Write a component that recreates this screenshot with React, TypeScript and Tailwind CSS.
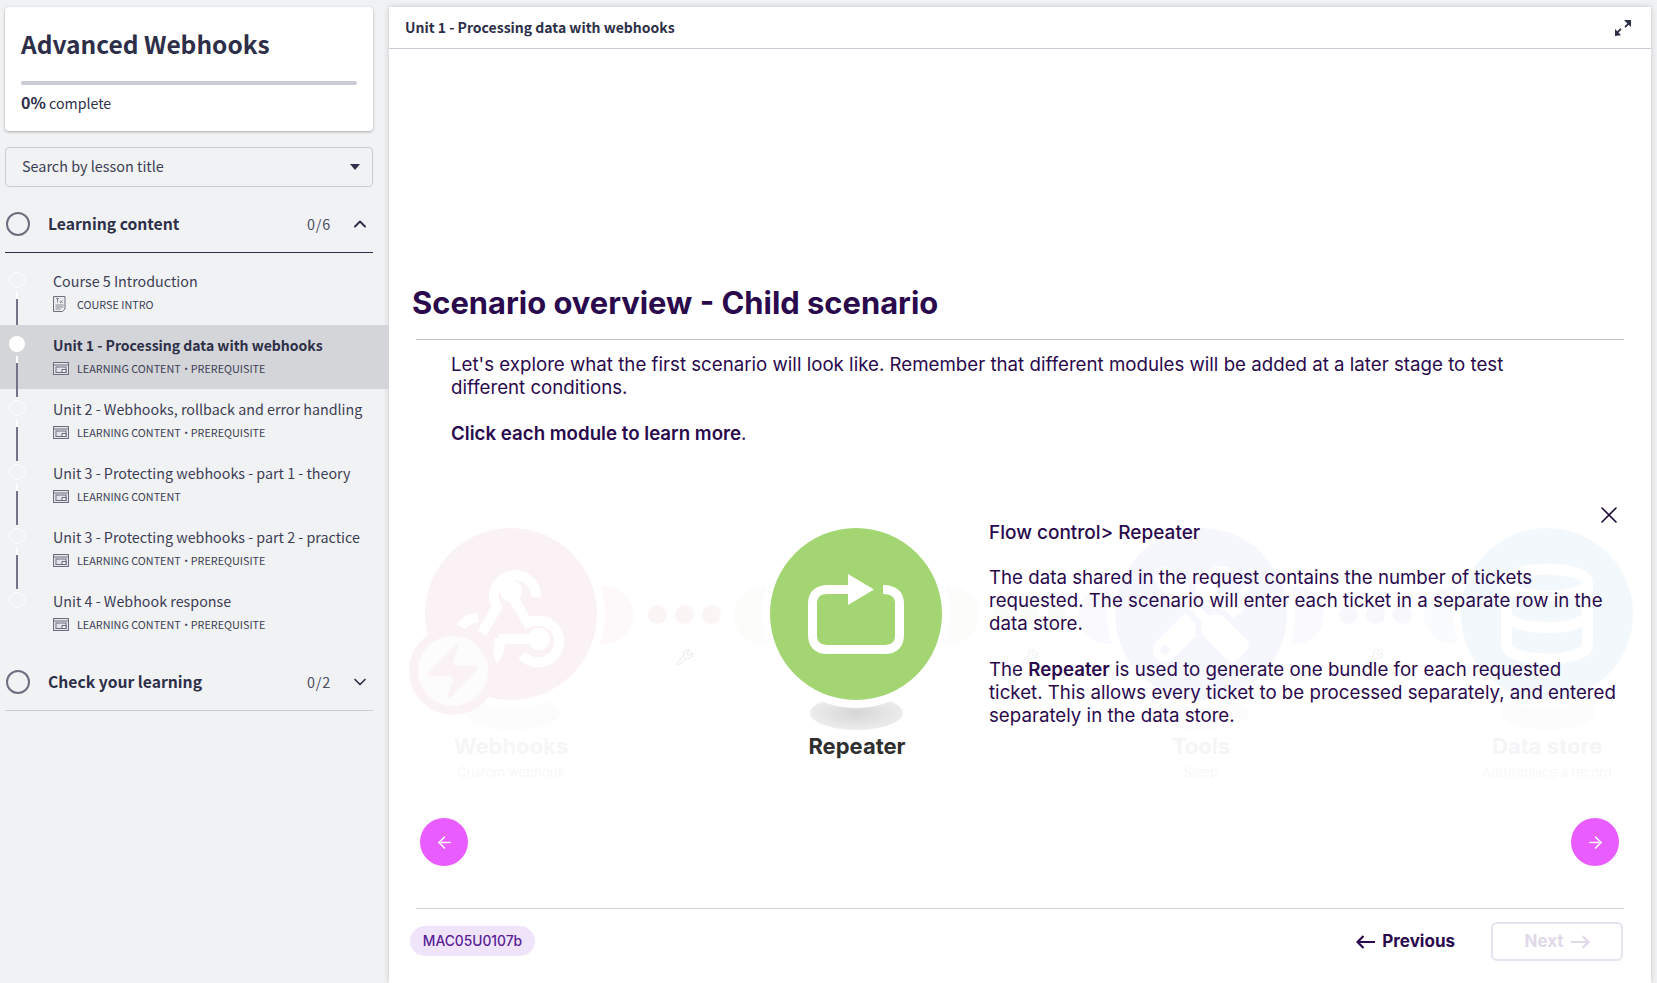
import { ChevronDown, ChevronUp, Zap, Database, Wrench, X, ArrowLeft, ArrowRight } from 'lucide-react'
import { FaTools } from 'react-icons/fa'

const SOURCE = "font-['Noto_Sans_CJK_SC',_'Noto_Sans',_sans-serif]"

const LESSONS = [
  { title: 'Unit 1 - Processing data with webhooks', prereq: true, active: true },
  { title: 'Unit 2 - Webhooks, rollback and error handling', prereq: true },
  { title: 'Unit 3 - Protecting webhooks - part 1 - theory', prereq: false },
  { title: 'Unit 3 - Protecting webhooks - part 2 - practice', prereq: true },
  { title: 'Unit 4 - Webhook response', prereq: true },
]

function SlideIcon() {
  return (
    <svg width="16" height="13" viewBox="0 0 16 13" fill="none" stroke="#6c6e80" strokeWidth="1">
      <rect x="0.5" y="0.5" width="15" height="12" fill="#e4e5ea" />
      <path d="M0.5 3h15" />
      <rect x="3" y="5" width="10" height="5.5" fill="none" />
      <rect x="9" y="7.5" width="4" height="3" fill="#f1f2f4" />
    </svg>
  )
}

function DocIcon() {
  return (
    <svg width="13" height="16" viewBox="0 0 13 16" fill="none" stroke="#6c6e80" strokeWidth="1">
      <path d="M0.5 0.500h11.500v12.500l-2.500 2.500h-9z" fill="#eceded" />
      <path d="M3 2.500h3M4.500 2.500v4M7 4.500l2.500 2.500M9.500 4.500l-2.500 2.500M2.500 9h8M2.500 11h8M2.500 13h5" strokeWidth="0.8" />
    </svg>
  )
}

function Dot({ filled, line }: { filled?: boolean; line?: boolean }) {
  return (
    <>
      <span
        className={
          filled
            ? 'absolute left-[9px] top-[11px] h-4 w-4 rounded-full bg-white'
            : 'absolute left-[9px] top-[11px] h-4 w-4 rounded-full border border-white'
        }
      />
      {line && (
        <span className="absolute left-[16px] top-[31px] flex h-[41px] w-[2px] flex-col">
          <span className="h-[7px] bg-white" />
          <span className="flex-1 bg-[#72748a]" />
        </span>
      )}
    </>
  )
}

function LessonRow({ title, meta, prereq, active, line, doc }: {
  title: string
  meta: string
  prereq?: boolean
  active?: boolean
  line?: boolean
  doc?: boolean
}) {
  return (
    <div className={active ? 'relative h-16 bg-[#d4d5d9] pl-[53px] pt-[8px]' : 'relative h-16 pl-[53px] pt-[8px]'}>
      <Dot filled={active} line={line} />
      <p className={active ? 'text-[14px] leading-6 font-semibold text-[#2d2f48]' : 'text-[14.3px] leading-6 text-[#3c3e55]'}>{title}</p>
      <div className="mt-[1px] flex h-[20px] items-center text-[10.8px] text-[#3c3e55]">
        <span className="flex w-6 items-center">{doc ? <DocIcon /> : <SlideIcon />}</span>
        <span>{meta}</span>
        {prereq && <span className="w-[10px] text-center">·</span>}
        {prereq && <span>PREREQUISITE</span>}
      </div>
    </div>
  )
}

function SectionHead({ title, count, open }: { title: string; count: string; open?: boolean }) {
  return (
    <div className="ml-[5px] flex h-[56px] w-[368px] items-center">
      <span className="ml-[1px] h-6 w-6 rounded-full border-2 border-[#6c6e80]" />
      <span className="ml-[18px] flex-1 text-[15.7px] font-semibold text-[#2d2f48]">{title}</span>
      <span className="text-[14.4px] tracking-[0.8px] text-[#4b4d63]">{count}</span>
      <span className="ml-[19px] mr-[3px] text-[#2d2f48]">
        {open ? <ChevronUp size={20} strokeWidth={2.4} /> : <ChevronDown size={20} strokeWidth={2} />}
      </span>
    </div>
  )
}

function Sidebar() {
  return (
    <aside className={`h-full w-[389px] shrink-0 pt-[7px] ${SOURCE}`}>
      <div className="ml-[5px] h-[124px] w-[368px] rounded bg-white px-4 pt-[19px] shadow-[0_1px_3px_rgba(0,0,0,0.3)]">
        <h2 className="text-[24.5px] leading-9 font-semibold text-[#2d2f48]">Advanced Webhooks</h2>
        <div className="mt-[19px] h-1 rounded bg-[#c9cbd6]" />
        <p className="mt-[5px] text-[14.2px] leading-6 text-[#2d2f48]">
          <span className="text-[16px] font-semibold">0%</span> complete
        </p>
      </div>
      <div className="mt-4 ml-[5px] flex h-10 w-[368px] items-center justify-between rounded border border-[#c9cbd6] pr-3 pl-4 text-[14.4px] text-[#3c3e55]">
        <span className="pb-[2px]">Search by lesson title</span>
        <span className="h-0 w-0 border-x-[5px] border-t-[6px] border-x-transparent border-t-[#2d2f48]" />
      </div>
      <div className="mt-[9px]">
        <SectionHead title="Learning content" count="0/6" open />
        <div className="ml-[5px] w-[368px] border-t border-[#2d2f48]" />
        <div className="mt-[8px]">
          <LessonRow title="Course 5 Introduction" meta="COURSE INTRO" line doc />
          {LESSONS.map((l, i) => (
            <LessonRow
              key={l.title}
              title={l.title}
              meta="LEARNING CONTENT"
              prereq={l.prereq}
              active={l.active}
              line={i < LESSONS.length - 1}
            />
          ))}
        </div>
        <div className="mt-[9px]">
          <SectionHead title="Check your learning" count="0/2" />
          <div className="ml-[5px] w-[368px] border-t border-[#c9cbd6]" />
        </div>
      </div>
    </aside>
  )
}

function RepeatIcon() {
  return (
    <svg width="96" height="80" viewBox="0 0 96 80">
      <path
        d="M42 15.500H20Q4.500 15.500 4.500 30V61Q4.500 75.500 20 75.500H76Q91.500 75.500 91.500 61V30Q91.500 15.500 75 15.500"
        fill="none"
        stroke="#fff"
        strokeWidth="9"
      />
      <path d="M40 0L66 15.500L40 31Z" fill="#fff" />
    </svg>
  )
}

function WebhookIcon() {
  return (
    <svg width="110" height="110" viewBox="0 0 110 110" fill="none" stroke="#fff" strokeWidth="10">
      <path d="M80 38A21 21 0 1 0 41 48L26 74" />
      <circle cx="55" cy="32" r="11" fill="#fff" stroke="none" />
      <path d="M58 40L74 68" />
      <path d="M43 80H83" />
      <path d="M72 64A21 21 0 1 1 66 96" />
      <circle cx="83" cy="80" r="11" fill="#fff" stroke="none" />
      <path d="M22 58Q10 60 5 68" />
      <path d="M43 78Q46 92 36 102" />
    </svg>
  )
}

function Dots({ className }: { className: string }) {
  return (
    <div className={`absolute top-[134px] flex gap-[8px] ${className}`}>
      <span className="h-[19px] w-[19px] rounded-full bg-current" />
      <span className="h-[19px] w-[19px] rounded-full bg-current" />
      <span className="h-[19px] w-[19px] rounded-full bg-current" />
    </div>
  )
}

// faded and active scenario modules, placed on the diagram canvas
function Diagram() {
  return (
    <div className="relative mt-[26px] flex-1 font-['Inter',_sans-serif]">
      {/* connector bumps */}
      <span className="absolute left-[186px] top-[115px] h-[58px] w-[58px] rounded-full bg-[#fdf8f9]" />
      <span className="absolute left-[345px] top-[115px] h-[58px] w-[58px] rounded-full bg-[#fcfdfa]" />
      <span className="absolute left-[532px] top-[115px] h-[58px] w-[58px] rounded-full bg-[#fcfdfa]" />
      <span className="absolute left-[689px] top-[115px] h-[58px] w-[58px] rounded-full bg-[#fafafe]" />
      <span className="absolute left-[877px] top-[115px] h-[58px] w-[58px] rounded-full bg-[#fafafe]" />
      <span className="absolute left-[1035px] top-[115px] h-[58px] w-[58px] rounded-full bg-[#f9fbfd]" />

      <Dots className="left-[259px] text-[#fcf5f6]" />
      <Dots className="left-[604px] text-[#fafcf8]" />
      <Dots className="left-[950px] text-[#f8f8fc]" />

      <Wrench size={18} className="absolute left-[287px] top-[177px] text-[#f1f1f1]" />
      <Wrench size={18} className="absolute left-[632px] top-[177px] text-[#f5f5f5]" />
      <Wrench size={18} className="absolute left-[977px] top-[177px] text-[#f5f5f5]" />

      {/* webhooks */}
      <span className="absolute left-[77px] top-[225px] h-[34px] w-[94px] rounded-[50%] bg-[#fcfcfc]" />
      <div className="absolute left-[36px] top-[57px] flex h-[172px] w-[172px] items-center justify-center rounded-full bg-[#fbf2f5] shadow-[0_0_0_8px_white]">
        <WebhookIcon />
      </div>
      <div className="absolute left-[20px] top-[156px] flex h-[88px] w-[88px] items-center justify-center rounded-full border-[9px] border-[#fbf2f5] bg-[#fdfcfc]">
        <Zap size={66} fill="#fbf2f5" strokeWidth={0} />
      </div>
      <p className="absolute left-[36px] top-[261px] w-[172px] text-center text-[22px] leading-7 font-bold text-[#f6f6f7]">Webhooks</p>
      <p className="absolute left-[36px] top-[292px] w-[172px] text-center text-[13px] text-[#f8f8f8]">Custom webhook</p>

      {/* repeater */}
      <span className="absolute left-[421px] top-[225px] h-[34px] w-[93px] rounded-[50%] bg-[radial-gradient(closest-side,#d6d6d6,#ececec)]" />
      <div className="absolute left-[381px] top-[57px] flex h-[172px] w-[172px] items-center justify-center rounded-full bg-[#a3d572] shadow-[0_0_0_8px_white]">
        <RepeatIcon />
      </div>
      <p className="absolute left-[382px] top-[261px] w-[172px] text-center text-[22px] leading-7 font-bold text-[#2f2f2f]">Repeater</p>

      {/* tools */}
      <span className="absolute left-[766px] top-[225px] h-[34px] w-[94px] rounded-[50%] bg-[#fcfcfc]" />
      <div className="absolute left-[726px] top-[57px] flex h-[172px] w-[172px] items-center justify-center rounded-full bg-[#f6f6fd] shadow-[0_0_0_8px_white]">
        <FaTools size={96} className="text-white" />
      </div>
      <p className="absolute left-[726px] top-[261px] w-[172px] text-center text-[22px] leading-7 font-bold text-[#f5f5f7]">Tools</p>
      <p className="absolute left-[726px] top-[292px] w-[172px] text-center text-[13px] text-[#f8f8f8]">Sleep</p>

      {/* data store */}
      <span className="absolute left-[1112px] top-[225px] h-[34px] w-[94px] rounded-[50%] bg-[#fcfcfc]" />
      <div className="absolute left-[1072px] top-[57px] flex h-[172px] w-[172px] items-center justify-center rounded-full bg-[#f2f8fb] shadow-[0_0_0_8px_white]">
        <Database size={108} strokeWidth={2.4} className="text-white" />
      </div>
      <p className="absolute left-[1072px] top-[261px] w-[172px] text-center text-[22px] leading-7 font-bold text-[#f5f5f7]">Data store</p>
      <p className="absolute left-[1072px] top-[292px] w-[172px] text-center text-[13px] text-[#f8f8f8]">Add/replace a record</p>

      {/* overlay text */}
      <div className="absolute left-[600px] top-[50px] w-[640px] text-[18.7px] leading-[23px] text-[#2a0a4d]">
        <p className="text-[19px] font-medium">Flow control&gt; Repeater</p>
        <p className="mt-[22px]">
          The data shared in the request contains the number of tickets requested. The scenario will enter each ticket in a separate row in the data store.
        </p>
        <p className="mt-[23px]">
          The <span className="font-semibold">Repeater</span> is used to generate one bundle for each requested<br />ticket. This allows every ticket to be processed separately, and entered separately in the data store.
        </p>
      </div>
      <X size={28} strokeWidth={1.4} className="absolute left-[1206px] top-[30px] text-[#1c0a36]" />

      <button className="absolute left-[31px] top-[347px] flex h-12 w-12 items-center justify-center rounded-full bg-[#e95cff] text-white">
        <ArrowLeft size={19} strokeWidth={2} />
      </button>
      <button className="absolute left-[1182px] top-[347px] flex h-12 w-12 items-center justify-center rounded-full bg-[#e95cff] text-white">
        <ArrowRight size={19} strokeWidth={2} />
      </button>
    </div>
  )
}

export default function App() {
  return (
    <div className="flex h-screen overflow-hidden bg-[#f1f2f4]">
      <Sidebar />
      <main className="mt-[7px] mr-[6px] flex flex-1 flex-col bg-white shadow-[0_0_6px_rgba(0,0,0,0.18)]">
        <header className={`flex h-[42px] shrink-0 items-center justify-between border-b border-[#c9cbd6] pr-[20px] pl-4 ${SOURCE}`}>
          <span className="pb-[1px] text-[14px] font-semibold text-[#2d2f48]">Unit 1 - Processing data with webhooks</span>
          <svg width="16" height="16" viewBox="0 0 16 16" fill="#2d2f48">
            <path d="M9 0h7v7l-2.300-2.300-3 3-1.300-1.300 3-3zM0 16v-7l2.300 2.300 3-3 1.300 1.300-3 3 2.400 2.700z" />
          </svg>
        </header>
        <div className="flex flex-1 flex-col font-['Inter',_sans-serif]">
          <h1 className="mt-[234px] ml-[23px] text-[30.9px] leading-10 font-bold text-[#2a0a4d]">Scenario overview - Child scenario</h1>
          <div className="mx-[27px] mt-[16px] border-t border-[#c8c2c2]" />
          <div className="mt-[13px] mr-[100px] ml-[62px] text-[18.7px] leading-[23px] text-[#2a0a4d]">
            <p>Let's explore what the first scenario will look like. Remember that different modules will be added at a later stage to test different conditions.</p>
            <p className="mt-[23px]"><span className="font-semibold">Click each module to learn more</span>.</p>
          </div>
          <Diagram />
          <div className="mx-[27px] border-t border-[#d8cfcf]" />
          <div className="flex h-[74px] shrink-0 items-start justify-between pt-[13px] pr-[28px] pl-[21px]">
            <span className="mt-[4px] flex h-[30px] w-[125px] items-center justify-center rounded-full bg-[#f0e4fb] text-[13.8px] font-medium text-[#5a1e96]">MAC05U0107b</span>
            <div className="flex items-center gap-[36px]">
              <button className="flex h-[39px] items-center gap-[7px] text-[17px] font-bold text-[#2a0a4d]">
                <svg width="19" height="14" viewBox="0 0 19 14" fill="none" stroke="currentColor" strokeWidth="2.2">
                  <path d="M7.500 1L1.500 7L7.500 13M1.500 7H19" />
                </svg>
                Previous
              </button>
              <button className="flex h-[39px] w-[132px] items-center justify-center gap-[7px] rounded-md border-2 border-[#e8e2f0] text-[17px] font-bold text-[#e0d9ea]">
                Next
                <svg width="19" height="14" viewBox="0 0 19 14" fill="none" stroke="currentColor" strokeWidth="2.2">
                  <path d="M11.500 1L17.500 7L11.500 13M17.500 7H0" />
                </svg>
              </button>
            </div>
          </div>
        </div>
      </main>
    </div>
  )
}
